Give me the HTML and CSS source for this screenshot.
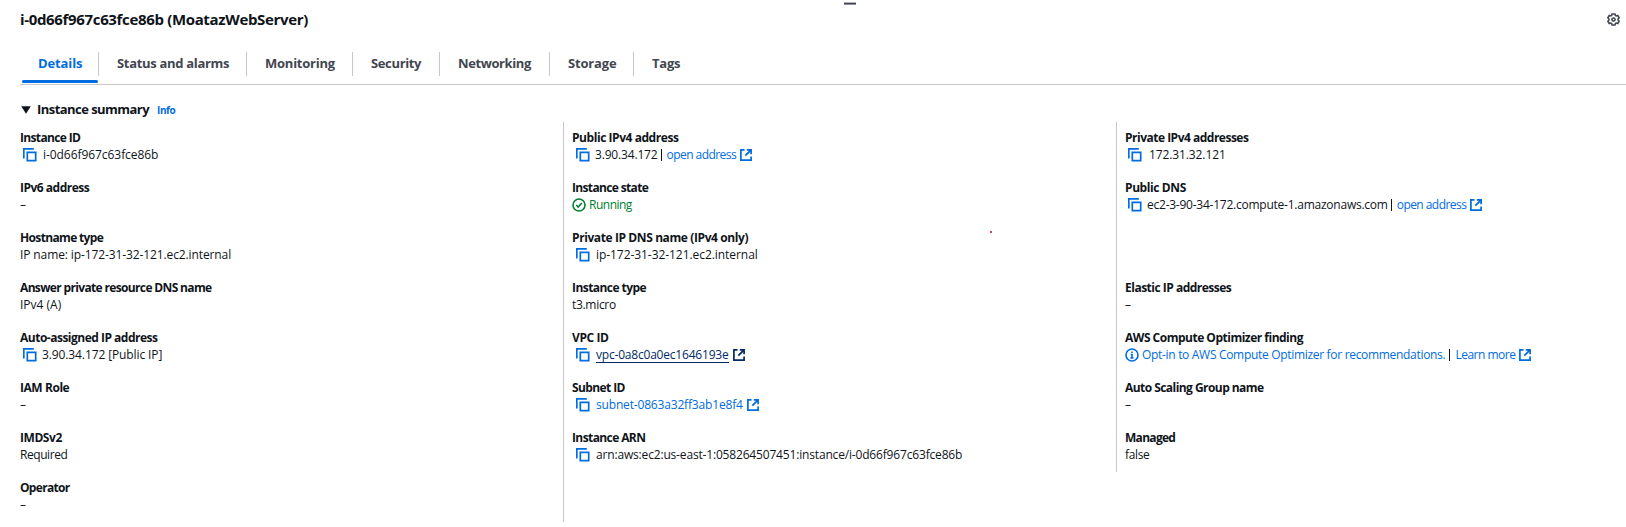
FILE: index.html
```html
<!DOCTYPE html>
<html lang="en">
<head>
<meta charset="utf-8">
<title>Instance details</title>
<link rel="stylesheet" href="styles.css">
</head>
<body>
<svg class="defs" aria-hidden="true">
  <symbol id="copy" viewBox="0 0 14 14"><path d="M.8 10.500V.8h10M4.300 4.300h8.400v8.400H4.300z"/></symbol>
  <symbol id="ext" viewBox="0 0 12 12"><path d="M4.500.9H.9v10.200h10.200V7.500M6.800.9h4.300v4.300M11.100.9 5.300 6.700"/></symbol>
  <symbol id="ok" viewBox="0 0 14 14"><circle cx="7" cy="7" r="6"/><path d="m4.200 7 2 2 3.600-4"/></symbol>
  <symbol id="info" viewBox="0 0 14 14"><circle cx="7" cy="7" r="6"/><path d="M5.700 6.500H7V10M5.400 10h3.200M7 3.600v1.500"/></symbol>
</svg>
<main class="panel">
  <span class="handle"></span>
  <header class="head">
    <h1 class="title">i-0d66f967c63fce86b (MoatazWebServer)</h1>
    <svg class="gear" viewBox="0 0 14 14"><path d="M5.400 1h3.200l.4 1.600 1 .6 1.600-.5L13 5.200 11.900 6.400v1.200L13 8.800l-1.400 2.500-1.600-.5-1 .6L8.600 13H5.400L5 11.400l-1-.6-1.600.5L1 8.800 2.100 7.600V6.400L1 5.200l1.400-2.500 1.600.5 1-.6z"/><circle cx="7" cy="7" r="1.700"/></svg>
  </header>
  <nav class="tabs">
    <a class="tab active w1"><span class="k10">Details</span></a>
    <a class="tab w2"><span class="k30">Status and alarms</span></a>
    <a class="tab w3"><span class="k25">Monitoring</span></a>
    <a class="tab w4"><span class="k35">Security</span></a>
    <a class="tab w5"><span class="k40">Networking</span></a>
    <a class="tab w6"><span class="k15">Storage</span></a>
    <a class="tab w7"><span class="k25">Tags</span></a>
  </nav>
  <div class="section"><svg class="caret" viewBox="0 0 10 8"><path d="M.2.2h9.600L5 7.800z"/></svg><h2 class="k55">Instance summary</h2><a class="infolink k40">Info</a></div>
  <div class="cols">
    <dl class="col">
      <div class="item"><dt class="k65">Instance ID</dt><dd><svg class="copy"><use href="#copy"/></svg><span class="k05 in1">i-0d66f967c63fce86b</span></dd></div>
      <div class="item"><dt class="k50">IPv6 address</dt><dd>–</dd></div>
      <div class="item"><dt class="k65">Hostname type</dt><dd class="k10">IP name: ip-172-31-32-121.ec2.internal</dd></div>
      <div class="item"><dt class="k65">Answer private resource DNS name</dt><dd>IPv4 (A)</dd></div>
      <div class="item"><dt class="k50">Auto-assigned IP address</dt><dd><svg class="copy"><use href="#copy"/></svg><span class="k10">3.90.34.172 [Public IP]</span></dd></div>
      <div class="item"><dt class="k45">IAM Role</dt><dd>–</dd></div>
      <div class="item"><dt class="k45">IMDSv2</dt><dd class="k45">Required</dd></div>
      <div class="item"><dt class="k70">Operator</dt><dd>–</dd></div>
    </dl>
    <dl class="col mid">
      <div class="item"><dt class="k45">Public IPv4 address</dt><dd><svg class="copy"><use href="#copy"/></svg><span class="k15">3.90.34.172</span><i class="bar"></i><a class="k55">open address</a><svg class="ext"><use href="#ext"/></svg></dd></div>
      <div class="item"><dt class="k65">Instance state</dt><dd class="ok"><svg class="status"><use href="#ok"/></svg><span class="k50">Running</span></dd></div>
      <div class="item"><dt class="k40">Private IP DNS name (IPv4 only)</dt><dd><svg class="copy"><use href="#copy"/></svg><span class="k05 in1">ip-172-31-32-121.ec2.internal</span></dd></div>
      <div class="item"><dt class="k55">Instance type</dt><dd class="k30">t3.micro</dd></div>
      <div class="item"><dt class="k40">VPC ID</dt><dd class="visited"><svg class="copy"><use href="#copy"/></svg><a class="k20 in1">vpc-0a8c0a0ec1646193e</a><svg class="ext"><use href="#ext"/></svg></dd></div>
      <div class="item"><dt class="k60">Subnet ID</dt><dd><svg class="copy"><use href="#copy"/></svg><a class="k15 in1">subnet-0863a32ff3ab1e8f4</a><svg class="ext"><use href="#ext"/></svg></dd></div>
      <div class="item"><dt class="k60">Instance ARN</dt><dd><svg class="copy"><use href="#copy"/></svg><span class="k15 in1">arn:aws:ec2:us-east-1:058264507451:instance/i-0d66f967c63fce86b</span></dd></div>
    </dl>
    <dl class="col last">
      <div class="item"><dt class="k50">Private IPv4 addresses</dt><dd><svg class="copy"><use href="#copy"/></svg><span class="k10 in2">172.31.32.121</span></dd></div>
      <div class="item"><dt class="k40">Public DNS</dt><dd><svg class="copy"><use href="#copy"/></svg><span class="k25">ec2-3-90-34-172.compute-1.amazonaws.com</span><i class="bar tight"></i><a class="k55">open address</a><svg class="ext"><use href="#ext"/></svg></dd></div>
      <div class="item"></div>
      <div class="item"><dt class="k50">Elastic IP addresses</dt><dd>–</dd></div>
      <div class="item"><dt class="k50">AWS Compute Optimizer finding</dt><dd><svg class="status info"><use href="#info"/></svg><a class="k30">Opt-in to AWS Compute Optimizer for recommendations.</a><i class="bar wide"></i><a class="k50">Learn more</a><svg class="ext"><use href="#ext"/></svg></dd></div>
      <div class="item"><dt class="k55">Auto Scaling Group name</dt><dd>–</dd></div>
      <div class="item"><dt class="k70">Managed</dt><dd class="k35">false</dd></div>
    </dl>
  </div>
  <span class="dot"></span>
</main>
</body>
</html>
```
FILE: styles.css
```css
* { box-sizing: border-box; margin: 0; padding: 0; }
body { background: #fff; color: #0f141a; font: 12px/17px "Open Sans", "Noto Sans", sans-serif; overflow: hidden; }
.defs { position: absolute; width: 0; height: 0; }
svg { fill: none; stroke: currentColor; stroke-width: 1.7; flex: none; display: block; }
.panel { position: relative; padding-left: 20px; width: 1626px; height: 527px; }
.handle { position: absolute; left: 844px; top: 2px; width: 12px; height: 3px; background: #424650; border-top: 1px solid #b4b6bd; border-bottom: 1px solid #8c8f98; }
.head { display: flex; justify-content: space-between; align-items: center; height: 38px; padding-right: 6px; }
.title { font-size: 15px; line-height: 20px; font-weight: 700; letter-spacing: -.34px; }
.gear { width: 13px; height: 13px; margin-top: 1px; color: #424650; }
.tabs { display: flex; height: 47px; padding-top: 14px; border-bottom: 1px solid #c6c6cd; font-size: 13px; font-weight: 700; }
.tab { position: relative; height: 24px; line-height: 22px; padding-left: 18px; border-right: 1px solid #c6c6cd; white-space: nowrap; }
.tab:last-child { border-right: 0; }
.active::after { content: ""; position: absolute; left: 2px; right: 0; bottom: -7px; height: 3px; border-radius: 2px; background: #006ce0; }
.w1 { width: 79px; }
.w2 { width: 148px; }
.w3 { width: 106px; }
.w4 { width: 87px; }
.w5 { width: 110px; }
.w6 { width: 84px; }
.w7 { width: 80px; }
.section { display: flex; align-items: center; height: 37px; padding-top: 11px; }
.section h2 { font-size: 13px; line-height: 18px; font-weight: 700; margin-left: 6px; }
.caret { width: 10px; height: 8px; margin: 2px 0 0 1px; fill: currentColor; stroke-width: 0; }
.infolink { font-size: 10px; font-weight: 700; margin-left: 8px; padding-top: 2px; }
.cols { display: grid; grid-template-columns: 543px 553px 510px; align-items: start; }
.mid, .last { border-left: 1px solid #c6c6cd; padding-left: 8px; }
.mid { height: 400px; }
.item { height: 50px; padding-top: 7px; }
dt { font-weight: 700; white-space: nowrap; }
dd { display: flex; align-items: center; height: 17px; white-space: nowrap; }
a { color: #006ce0; }
.tab { color: #424650; }
.tab.active { color: #006ce0; }
.copy { width: 14px; height: 14px; margin: 1px 5px 0 3px; color: #006ce0; }
.mid .copy { margin-left: 4px; }
.ext { width: 12px; height: 12px; margin: 1px 0 0 4px; color: #006ce0; }
.status { width: 14px; height: 14px; margin: 1px 3px 0 0; stroke-width: 1.6; }
.info { color: #006ce0; }
.ok { color: #00802f; }
.in1 { margin-left: 1px; }
.in2 { margin-left: 2px; }
.bar { width: 1px; height: 12px; margin: 0 4px; background: currentColor; }
.bar.tight { margin: 0 5px 0 3px; }
.bar.wide { margin: 0 5px 0 4px; }
.visited a, .visited .ext { color: #002b66; }
.visited a { height: 17px; border-bottom: 1px solid #002b66; }
.dot { position: absolute; left: 990px; top: 231px; width: 2px; height: 2px; background: #e0434f; }
.k05 { letter-spacing: -.06px; }
.k10 { letter-spacing: -.11px; }
.k15 { letter-spacing: -.17px; }
.k20 { letter-spacing: -.2px; }
.k25 { letter-spacing: -.24px; }
.k30 { letter-spacing: -.31px; }
.k35 { letter-spacing: -.36px; }
.k40 { letter-spacing: -.4px; }
.k45 { letter-spacing: -.44px; }
.k50 { letter-spacing: -.5px; }
.k55 { letter-spacing: -.55px; }
.k60 { letter-spacing: -.6px; }
.k65 { letter-spacing: -.65px; }
.k70 { letter-spacing: -.7px; }
```
